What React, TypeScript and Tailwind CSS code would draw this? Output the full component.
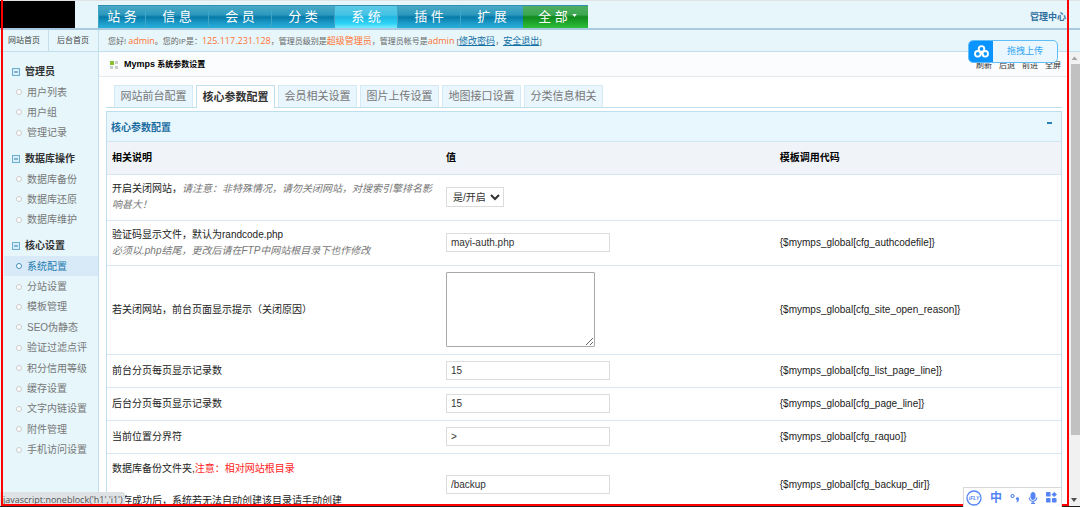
import React, { useState } from 'react';

interface MenuGroup {
  title: string;
  listClass: string;
  items: string[];
}

interface SettingRow {
  id: string;
  label: React.ReactNode;
  field: React.ReactNode;
  code: string;
  height: string;
}

const navItems = ['信 息', '会 员', '分 类', '系 统', '插 件', '扩 展'];

const menuGroups: MenuGroup[] = [
  { title: '管理员', listClass: 'h-[61px]', items: ['用户列表', '用户组', '管理记录'] },
  { title: '数据库操作', listClass: 'h-[61px]', items: ['数据库备份', '数据库还原', '数据库维护'] },
  {
    title: '核心设置',
    listClass: 'h-[204px]',
    items: [
      '系统配置',
      '分站设置',
      '模板管理',
      'SEO伪静态',
      '验证过滤点评',
      '积分信用等级',
      '缓存设置',
      '文字内链设置',
      '附件管理',
      '手机访问设置'
    ]
  }
];

const tabs = ['网站前台配置', '核心参数配置', '会员相关设置', '图片上传设置', '地图接口设置', '分类信息相关'];

const TextField = ({ id, value }: { id: string; value: string }) => (
  <input
    id={id}
    type="text"
    defaultValue={value}
    className="block h-[19px] w-[164px] border border-[#dcdcdc] bg-white px-1 text-[10px] text-[#333] outline-none"
  />
);

const rows: SettingRow[] = [
  {
    id: 'cfg_if_site_open',
    label: (
      <>
        开启关闭网站，<i className="text-[#777]">请注意：非特殊情况，请勿关闭网站，对搜索引擎排名影响甚大！</i>
      </>
    ),
    field: (
      <select
        id="cfg_if_site_open"
        className="block h-5 w-[58px] border border-[#dcdcdc] bg-white pl-[2px] text-[10px] text-[#333]"
      >
        <option>是/开启</option>
        <option>否/关闭</option>
      </select>
    ),
    code: '',
    height: 'h-[46px]'
  },
  {
    id: 'cfg_authcodefile',
    label: (
      <>
        验证码显示文件，默认为randcode.php
        <br />
        <i className="text-[#777]">必须以.php结尾，更改后请在FTP中网站根目录下也作修改</i>
      </>
    ),
    field: <TextField id="cfg_authcodefile" value="mayi-auth.php" />,
    code: '{$mymps_global[cfg_authcodefile]}',
    height: 'h-[45px]'
  },
  {
    id: 'cfg_site_open_reason',
    label: '若关闭网站，前台页面显示提示（关闭原因）',
    field: (
      <textarea
        id="cfg_site_open_reason"
        className="block h-[75px] w-[149px] rounded-[1px] border border-[#a9a9a9] bg-white p-1 text-[10px] text-[#333]"
      />
    ),
    code: '{$mymps_global[cfg_site_open_reason]}',
    height: 'h-[89px]'
  },
  {
    id: 'cfg_list_page_line',
    label: '前台分页每页显示记录数',
    field: <TextField id="cfg_list_page_line" value="15" />,
    code: '{$mymps_global[cfg_list_page_line]}',
    height: 'h-[33px]'
  },
  {
    id: 'cfg_page_line',
    label: '后台分页每页显示记录数',
    field: <TextField id="cfg_page_line" value="15" />,
    code: '{$mymps_global[cfg_page_line]}',
    height: 'h-[33px]'
  },
  {
    id: 'cfg_raquo',
    label: '当前位置分界符',
    field: <TextField id="cfg_raquo" value=">" />,
    code: '{$mymps_global[cfg_raquo]}',
    height: 'h-[33px]'
  },
  {
    id: 'cfg_backup_dir',
    label: (
      <>
        数据库备份文件夹,<span className="text-[#ff1a1a]">注意：相对网站根目录</span>
        <br />
        <br />
        保存成功后，系统若无法自动创建该目录请手动创建
      </>
    ),
    field: <TextField id="cfg_backup_dir" value="/backup" />,
    code: '{$mymps_global[cfg_backup_dir]}',
    height: 'h-[63px]'
  }
];

const navBase =
  'flex h-full items-center justify-center border-l border-[#3fa5c6] text-[13px] text-white';

const Header = () => (
  <header className="flex h-[30px] shrink-0 items-end border-t border-b-2 border-t-[#dfe3e6] border-b-[#a8c9df] bg-[#e6f6fb]">
    <div className="h-full w-[75px] bg-black" />
    <nav className="ml-[23px] flex h-[23px] border-t border-[#2f8fb0]">
      <a
        href="#"
        className={`${navBase} w-[47px] bg-[linear-gradient(#4ba9c6_0%,#2b98bd_40%,#067aa8_50%,#1b98c6_75%,#27b0da_100%)]`}
      >
        站 务
      </a>
      {navItems.map((item) => (
        <a
          key={item}
          href="#"
          className={`${navBase} w-[63px] ${
            item === '系 统'
              ? 'bg-[linear-gradient(#5cc9e6_0%,#45c3e6_40%,#1fb5e0_50%,#2fd3f5_80%,#7cecff_100%)]'
              : 'bg-[linear-gradient(#4ba9c6_0%,#2b98bd_40%,#067aa8_50%,#1b98c6_75%,#27b0da_100%)]'
          }`}
        >
          {item}
        </a>
      ))}
      <button className="flex h-full w-[65px] items-center justify-center gap-1 bg-[linear-gradient(#4fae62_0%,#3aa650_40%,#108a1c_50%,#1fa52c_75%,#2fbf3c_100%)] pl-1 text-[13px] text-white">
        全 部
        <svg viewBox="0 0 6 4" className="mb-1 h-[3px] w-[5px]" fill="currentColor">
          <path d="M0 0h6L3 4z" />
        </svg>
      </button>
    </nav>
    <a href="#" className="mr-[14px] mb-[5px] ml-auto text-[9px] leading-3 font-bold text-[#2f6e9b]">
      管理中心
    </a>
  </header>
);

const UserBar = () => (
  <div className="flex h-[22px] shrink-0 items-center border-b border-[#c3dfee] bg-[#e6f6fb] text-[8px] text-[#666]">
    <div className="flex h-full w-[99px] items-center border-r border-[#c3dfee] text-[#444]">
      <a href="#" className="flex h-full w-[49px] items-center border-r border-[#c3dfee] pl-2">
        网站首页
      </a>
      <a href="#" className="pl-2">
        后台首页
      </a>
    </div>
    <p className="pl-[9px] font-['Open_Sans','Noto_Sans_CJK_SC',sans-serif] whitespace-nowrap">
      您好! <span className="text-[9px] text-[#ff7332]">admin</span>。您的IP是：
      <span className="text-[9px] text-[#ff7332]">125.117.231.128</span>，管理员级别是
      <span className="text-[9px] text-[#ff7332]">超级管理员</span>，管理员帐号是
      <span className="text-[9px] text-[#ff7332]">admin</span> [
      <a href="#" className="text-[9px] text-[#1670a5] underline">修改密码</a>，
      <a href="#" className="text-[9px] text-[#1670a5] underline">安全退出</a>]
    </p>
  </div>
);

const Sidebar = () => (
  <aside className="flex w-[99px] shrink-0 flex-col gap-[5px] border-r border-[#c3dfee] bg-[#e6f6fb] pt-[9px] text-[10px] text-[#777]">
    {menuGroups.map((group) => (
      <section key={group.title}>
        <h2 className="flex h-[21px] items-center gap-[5px] pl-3 font-bold text-[#333]">
          <svg viewBox="0 0 8 8" className="h-2 w-2" fill="none" stroke="#69aed3">
            <rect x="0.5" y="0.5" width="7" height="7" fill="#d9eefa" />
            <path d="M2 4h4" stroke="#2b83b8" />
          </svg>
          {group.title}
        </h2>
        <ul className={`grid auto-rows-fr ${group.listClass}`}>
          {group.items.map((item) => {
            const active = item === '系统配置';
            return (
              <li key={item} className={`ml-1 flex ${active ? 'bg-[#d8eaf7] text-[#1e7bb0]' : ''}`}>
                <a href="#" className="flex items-center gap-[5px] pl-3">
                  <span
                    className={`h-[6px] w-[6px] rounded-full border bg-white ${
                      active ? 'border-[#3d8fbd]' : 'border-[#ccc]'
                    }`}
                  />
                  {item}
                </a>
              </li>
            );
          })}
        </ul>
      </section>
    ))}
  </aside>
);

const SettingsTable = () => {
  const [open, setOpen] = useState(true);

  return (
    <section className="mt-[3px] border border-[#bfdeee] text-[10px]">
      <div className="flex h-[30px] items-center justify-between border-b border-[#cfe6f2] bg-[#e8f6fe] pt-px pr-[9px] pl-1">
        <h2 className="font-bold text-[#1a6c9f]">核心参数配置</h2>
        <button
          aria-label="折叠"
          onClick={() => setOpen(!open)}
          className="flex h-3 items-start self-start pt-[9px]"
        >
          <span className="h-[2px] w-[5px] bg-[#2b7fb3]" />
        </button>
      </div>
      {open && (
        <table className="w-full table-fixed border-collapse text-left leading-4 text-[#222]">
          <thead>
            <tr className="h-8 border-b border-[#d5e6f1] bg-[#f0f4f9] text-black">
              <th className="w-[35%] px-[5px]">相关说明</th>
              <th className="w-[35%] px-[5px]">值</th>
              <th className="w-[30%] px-[5px]">模板调用代码</th>
            </tr>
          </thead>
          <tbody>
            {rows.map((row) => (
              <tr key={row.id} className={`border-b border-[#d8e8f2] ${row.height}`}>
                <td className="px-[5px]">
                  <label htmlFor={row.id}>{row.label}</label>
                </td>
                <td className="px-[5px]">{row.field}</td>
                <td className="px-[5px]">{row.code}</td>
              </tr>
            ))}
          </tbody>
        </table>
      )}
    </section>
  );
};

const Main = () => {
  const [activeTab, setActiveTab] = useState('核心参数配置');

  return (
    <main className="min-w-0 flex-1 bg-white">
      <div className="flex h-[25px] items-center border-b border-[#e6eaec] bg-[#fbfcfd] pt-px pr-[7px] pl-[11px] text-[8px]">
        <svg viewBox="0 0 8 8" className="h-2 w-2">
          <path d="M0 0h4v4H0z" fill="#8cbf2f" />
          <path d="M5 0h3v3H5zM0 5h3v3H0zM5 5h3v3H5z" fill="#c9cdc9" />
        </svg>
        <h1 className="ml-[6px] font-bold text-black">
          <span className="text-[9px]">Mymps</span> 系统参数设置
        </h1>
        <div className="ml-auto flex gap-[7px] pt-[3px] text-[#333]">
          <button>刷新</button>
          <button>后退</button>
          <button>前进</button>
          <button>全屏</button>
        </div>
      </div>
      <div className="pt-2 pr-[6px] pl-[7px]">
        <div className="flex h-[23px] gap-[3px] border-b border-[#bfdeee] pl-2">
          {tabs.map((tab) => (
            <button
              key={tab}
              onClick={() => setActiveTab(tab)}
              className={`w-[79px] border border-b-0 text-[11px] whitespace-nowrap ${
                tab === activeTab
                  ? '-mb-px border-[#bfdeee] bg-white font-bold text-[#333]'
                  : 'border-[#d3e9f5] bg-[#e9f6fe] text-[#777]'
              }`}
            >
              {tab}
            </button>
          ))}
        </div>
        <SettingsTable />
      </div>
    </main>
  );
};

const Scrollbar = () => (
  <div className="flex w-3 shrink-0 flex-col items-center bg-[#f1f1f1] pb-[3px]">
    <svg viewBox="0 0 12 12" className="h-3 w-3 shrink-0">
      <path d="M3.5 8L6.5 4.500L9.500 8z" fill="#a3a3a3" />
    </svg>
    <div className="ml-[2px] h-[82%] w-[9px] bg-[#c1c1c1]" />
    <svg viewBox="0 0 12 8" className="mt-auto h-2 w-3 shrink-0">
      <path d="M3 2h6L6 6z" fill="#505050" />
    </svg>
  </div>
);

const UploadWidget = () => (
  <button className="absolute top-10 right-[22px] flex h-[23px] w-[90px] overflow-hidden rounded-[5px] border border-[#5fbdf7] bg-[#ebf7ff] text-[9px] text-[#2ea5f2]">
    <span className="flex h-full w-6 items-center justify-center bg-[#0a94ff]">
      <svg viewBox="0 0 16 14" className="h-[13px] w-[15px]" fill="none" stroke="#fff" strokeWidth="2">
        <circle cx="8" cy="4.200" r="3" />
        <circle cx="4" cy="9.500" r="3" />
        <circle cx="12" cy="9.500" r="3" />
        <path d="M7 7.500l3.500 4" />
      </svg>
    </span>
    <span className="flex h-full flex-1 items-center justify-center">拖拽上传</span>
  </button>
);

const InputMethodBar = () => (
  <div className="absolute right-[18px] bottom-0 flex h-5 w-[99px] items-center justify-between border border-b-0 border-[#d8d8d8] bg-white px-[2px] text-[#5585f5]">
    <svg viewBox="0 0 16 16" className="h-4 w-4">
      <circle cx="8" cy="8" r="7" fill="none" stroke="currentColor" strokeWidth="1.300" />
      <text x="8" y="10" textAnchor="middle" fontSize="5" fontWeight="bold" fontStyle="italic" fill="currentColor">
        iFLY
      </text>
    </svg>
    <span className="text-[12px] leading-4 font-bold">中</span>
    <svg viewBox="0 0 10 10" className="h-[10px] w-[10px]">
      <circle cx="2.500" cy="3" r="1.500" fill="none" stroke="currentColor" strokeWidth="1.200" />
      <path d="M6 5.500a1.500 1.500 0 1 1 3 .5c0 1.800-.8 3-2.300 3.500l-.4-.7c.7-.3 1-.8 1.100-1.400C6.500 7.300 6 6.500 6 5.500z" fill="currentColor" />
    </svg>
    <svg viewBox="0 0 10 12" className="h-3 w-[10px]" fill="none" stroke="currentColor">
      <rect x="3" y="0.5" width="4" height="7" rx="2" fill="currentColor" />
      <path d="M1.200 5.500a3.800 3.800 0 0 0 7.600 0M5 9.300V11M3 11.300h4" strokeWidth="1.200" />
    </svg>
    <svg viewBox="0 0 12 12" className="mr-[2px] h-[11px] w-[11px]" fill="currentColor">
      <rect x="0" y="0" width="5" height="5" rx="1" />
      <path d="M9 0l3 2.700L9 5.400 6 2.700z" />
      <rect x="0" y="6.500" width="5" height="5" rx="1" />
      <rect x="6.500" y="6.500" width="5" height="5" rx="1" />
    </svg>
  </div>
);

const App: React.FC = () => {
  return (
    <div className="relative flex h-screen flex-col overflow-hidden bg-white font-['Liberation_Sans','Noto_Sans_CJK_SC',sans-serif]">
      <Header />
      <UserBar />
      <div className="flex min-h-0 flex-1 overflow-hidden">
        <Sidebar />
        <Main />
        <Scrollbar />
      </div>
      <div className="absolute bottom-px left-0 h-[14px] rounded-tr-[3px] bg-[#dee2e5] pr-[2px] pl-[3px] font-['Open_Sans',sans-serif] text-[9px] leading-4 text-[#555]">
        javascript:noneblock('h1','i1')
      </div>
      <div className="pointer-events-none absolute top-0 right-[11px] bottom-px left-px border-x-2 border-b-2 border-[#f00]" />
      <div className="absolute inset-x-0 bottom-0 h-px bg-[#222]" />
      <UploadWidget />
      <InputMethodBar />
    </div>
  );
};

export default App;
